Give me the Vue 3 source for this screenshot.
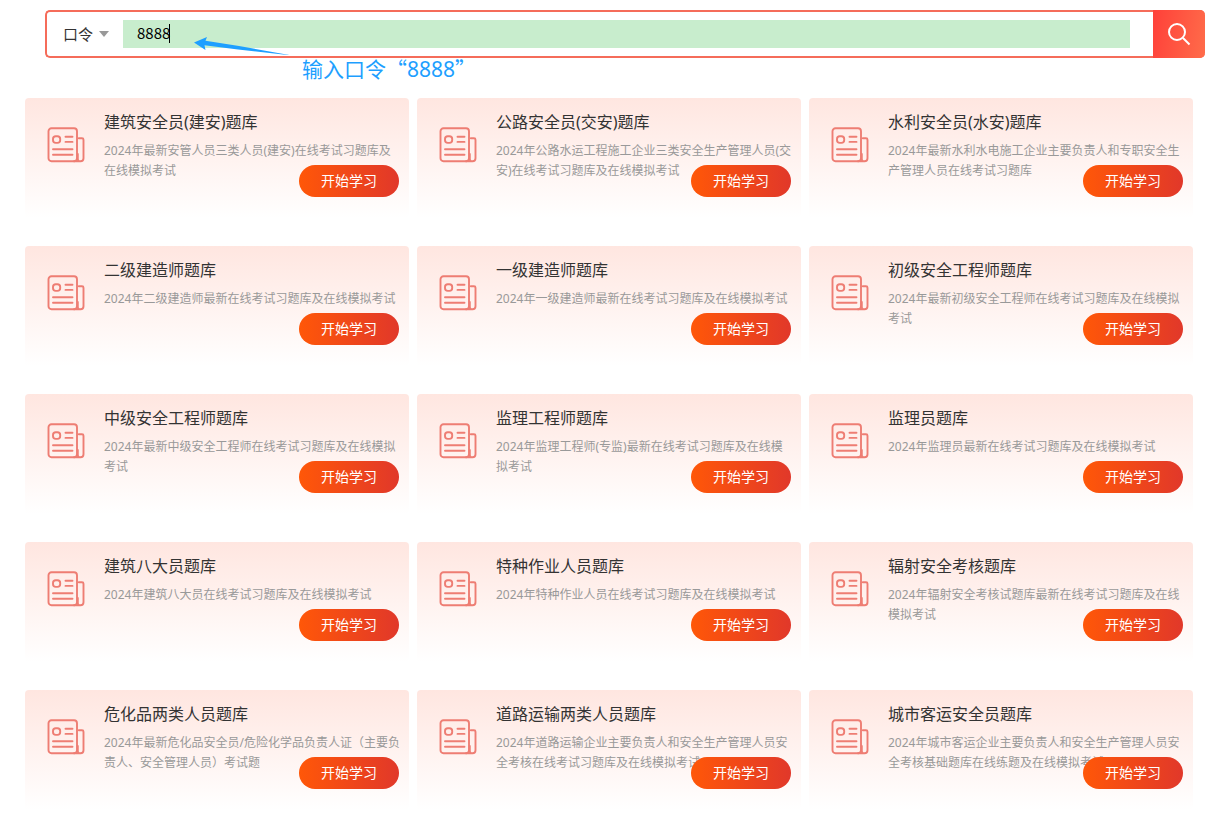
<script setup>
import { ref } from 'vue'

const mode = ref('口令')
const keyword = ref('8888')

const banks = [
  { title: '建筑安全员(建安)题库', desc: '2024年最新安管人员三类人员(建安)在线考试习题库及在线模拟考试' },
  { title: '公路安全员(交安)题库', desc: '2024年公路水运工程施工企业三类安全生产管理人员(交安)在线考试习题库及在线模拟考试' },
  { title: '水利安全员(水安)题库', desc: '2024年最新水利水电施工企业主要负责人和专职安全生产管理人员在线考试习题库' },
  { title: '二级建造师题库', desc: '2024年二级建造师最新在线考试习题库及在线模拟考试' },
  { title: '一级建造师题库', desc: '2024年一级建造师最新在线考试习题库及在线模拟考试' },
  { title: '初级安全工程师题库', desc: '2024年最新初级安全工程师在线考试习题库及在线模拟考试' },
  { title: '中级安全工程师题库', desc: '2024年最新中级安全工程师在线考试习题库及在线模拟考试' },
  { title: '监理工程师题库', desc: '2024年监理工程师(专监)最新在线考试习题库及在线模拟考试' },
  { title: '监理员题库', desc: '2024年监理员最新在线考试习题库及在线模拟考试' },
  { title: '建筑八大员题库', desc: '2024年建筑八大员在线考试习题库及在线模拟考试' },
  { title: '特种作业人员题库', desc: '2024年特种作业人员在线考试习题库及在线模拟考试' },
  { title: '辐射安全考核题库', desc: '2024年辐射安全考核试题库最新在线考试习题库及在线模拟考试' },
  { title: '危化品两类人员题库', desc: '2024年最新危化品安全员/危险化学品负责人证（主要负责人、安全管理人员）考试题' },
  { title: '道路运输两类人员题库', desc: '2024年道路运输企业主要负责人和安全生产管理人员安全考核在线考试习题库及在线模拟考试' },
  { title: '城市客运安全员题库', desc: '2024年城市客运企业主要负责人和安全生产管理人员安全考核基础题库在线练题及在线模拟考试' },
]
</script>

<template>
  <div class="page" lang="zh-CN">
    <form class="search" @submit.prevent>
      <div class="mode">
        <select v-model="mode" aria-label="搜索方式">
          <option>口令</option>
        </select>
        <svg class="caret-down" width="10" height="6" viewBox="0 0 10 6" aria-hidden="true">
          <path d="M0 0H10L5 6Z" fill="#999" />
        </svg>
      </div>
      <div class="field">
        <input v-model="keyword" type="text" aria-label="口令" />
        <i class="cursor" aria-hidden="true"></i>
      </div>
      <button class="go" type="submit" aria-label="搜索">
        <svg width="24" height="24" viewBox="0 0 24 24" fill="none" stroke="#fff" stroke-width="2" aria-hidden="true">
          <circle cx="10" cy="10" r="8" />
          <path d="M16 16L22.5 22.5" />
        </svg>
      </button>
      <svg class="arrow" width="100" height="20" viewBox="0 0 100 20" aria-hidden="true">
        <path d="M0 7.5L13 2L11.5 5.8L45 11L98 20.5L44 14.5L10.5 10.3L11.5 15Z" fill="#1e9fff" />
      </svg>
      <p class="hint">输入口令<span class="quote">“</span>8888<span class="quote">”</span></p>
    </form>

    <main class="grid">
      <article v-for="bank in banks" :key="bank.title" class="card">
        <svg class="icon" width="38" height="37" viewBox="0 0 38 37" fill="none" stroke="#ee7d73" stroke-width="1.9" stroke-linecap="round" stroke-linejoin="round" aria-hidden="true">
          <rect x="1.5" y="2.2" width="28.5" height="33" rx="3" />
          <path d="M31.8 12.3H35Q36.5 12.3 36.5 13.8V32.2Q36.5 35.2 33.5 35.2H27M30.8 28V33Q30.8 34.4 32 35" />
          <rect x="6" y="10.3" width="7.2" height="6.6" rx="2.8" />
          <path d="M18.5 10.7H25.5M18.5 15.9H25.5M6 23.3H25.5M6 28.8H25.5" />
        </svg>
        <div class="body">
          <h2>{{ bank.title }}</h2>
          <p>{{ bank.desc }}</p>
        </div>
        <button class="start" type="button">开始学习</button>
      </article>
    </main>
  </div>
</template>

<style>
body {
  margin: 0;
  background: #fff;
}
</style>

<style scoped>
.page {
  box-sizing: border-box;
  padding: 10px 17px 18px 25px;
  font-family: "Noto Sans", "Noto Sans CJK SC", sans-serif;
  color: #333;
}

.search {
  position: relative;
  box-sizing: border-box;
  display: flex;
  align-items: center;
  height: 48px;
  margin-left: 20px;
  border: 2px solid #f56c5a;
  border-right: 0;
  border-radius: 5px;
}

.mode {
  display: flex;
  align-items: center;
  width: 76px;
  flex: none;
}

.mode select {
  appearance: none;
  width: 36px;
  height: 28px;
  margin-left: 16px;
  padding: 0 0 2px;
  border: 0;
  background: transparent;
  color: #333;
  font: 15px "Noto Sans CJK SC", sans-serif;
  outline: none;
}

.field {
  position: relative;
  flex: 1;
  margin-right: 23px;
}

.field input {
  display: block;
  box-sizing: border-box;
  width: 100%;
  height: 28px;
  padding: 0 14px 4px;
  border: 0;
  background: #c8edcd;
  color: #000;
  font: 15px "Noto Sans CJK SC", sans-serif;
  outline: none;
}

.cursor {
  position: absolute;
  left: 46px;
  top: 4px;
  width: 1px;
  height: 19px;
  background: #000;
}

.go {
  display: flex;
  align-items: center;
  justify-content: center;
  flex: none;
  width: 52px;
  height: 48px;
  padding: 0;
  border: 0;
  border-radius: 0 5px 5px 0;
  background: linear-gradient(100deg, #ff4039, #ff6c4a);
}

.arrow {
  position: absolute;
  left: 147px;
  top: 23px;
}

.hint {
  position: absolute;
  left: 255px;
  top: 41px;
  margin: 0;
  color: #1e9fff;
  font-size: 21px;
  line-height: 30px;
  white-space: nowrap;
}

.quote {
  font-family: "Noto Sans CJK SC", sans-serif;
}

.grid {
  display: grid;
  grid-template-columns: repeat(3, 1fr);
  gap: 28px 8px;
  margin: 40px 12px 0 0;
}

.card {
  position: relative;
  box-sizing: border-box;
  display: flex;
  align-items: flex-start;
  min-height: 120px;
  padding: 14px 7px 10px 22px;
  border-radius: 4px;
  background: linear-gradient(#ffe6e0, #fff);
}

.icon {
  flex: none;
  margin-top: 14px;
}

.body {
  flex: 1;
  margin-left: 19px;
}

h2 {
  margin: 0;
  font-size: 16px;
  font-weight: 400;
  line-height: 20px;
}

.body p {
  margin: 9px 0 0;
  color: #999;
  font-size: 12px;
  line-height: 20px;
}

.start {
  position: absolute;
  right: 10px;
  top: 67px;
  width: 100px;
  height: 32px;
  padding: 0 0 2px;
  border: 0;
  border-radius: 16px;
  background: linear-gradient(90deg, #ff5708, #e1382a);
  color: #fff;
  font: 14px "Noto Sans", "Noto Sans CJK SC", sans-serif;
}
</style>
